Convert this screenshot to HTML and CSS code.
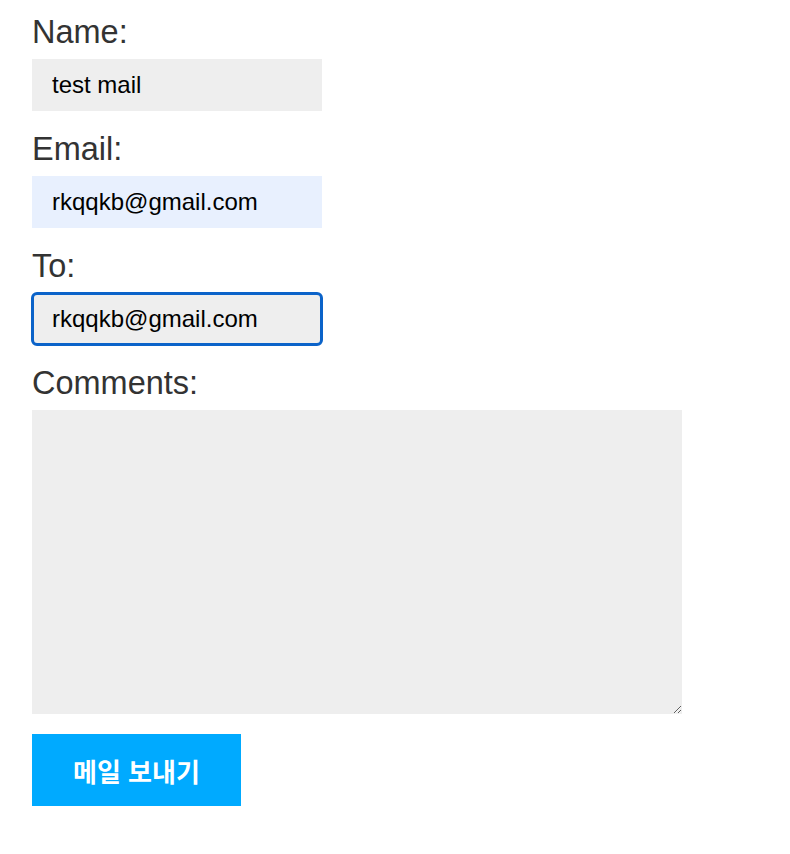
FILE: index.html
```html
<!DOCTYPE html>
<html lang="ko">
    <head>
        <meta charset="UTF-8">
        <meta name="viewport" content="width=device-width, initial-scale=1.0">
        <title>메일 보내기</title>
        <link rel="stylesheet" href="styles.css">
    </head>

    <body>
        <form id="mailForm" class="mail-form">
            <div class="field">
                <label for="name">Name:</label>
                <input type="text" id="name" value="test mail">
            </div>
            <div class="field">
                <label for="email">Email:</label>
                <input type="text" id="email" class="autofill" value="rkqqkb@gmail.com">
            </div>
            <div class="field">
                <label for="to">To:</label>
                <input type="text" id="to" class="focused" value="rkqqkb@gmail.com">
            </div>
            <div class="field field-last">
                <label for="comments">Comments:</label>
                <textarea id="comments"></textarea>
            </div>
            <button type="submit" class="send-button">메일 보내기</button>
        </form>
    </body>
</html>
```

FILE: styles.css
```css
* {
    box-sizing: border-box;
    margin: 0;
    padding: 0;
}
body {
    background-color: #fff;
    font-family: "Liberation Sans", Arial, sans-serif;
    padding: 13px 32px 0;
}
.field {
    margin-bottom: 19px;
}
.field-last {
    margin-bottom: 20px;
}
.field label {
    display: block;
    color: #333;
    font-size: 32.5px;
    line-height: 38px;
    margin-bottom: 8px;
}
.field input {
    display: block;
    width: 290px;
    height: 52px;
    padding: 0 20px;
    border: none;
    background-color: #eee;
    color: #000;
    font-family: "Liberation Sans", Arial, sans-serif;
    font-size: 24px;
}
.field input.autofill {
    background-color: #e8f0fe;
}
.field input.focused {
    outline: 3px solid #0b63c9;
    outline-offset: -2px;
    border-radius: 5px;
}
.field textarea {
    display: block;
    width: 650px;
    height: 304px;
    border: none;
    background-color: #eee;
    resize: both;
}
.send-button {
    display: block;
    height: 72px;
    padding: 0 41px;
    border: none;
    background-color: #00aaff;
    color: #fff;
    font-family: "Noto Sans CJK KR", sans-serif;
    font-weight: bold;
    font-size: 26px;
    cursor: pointer;
}
```
